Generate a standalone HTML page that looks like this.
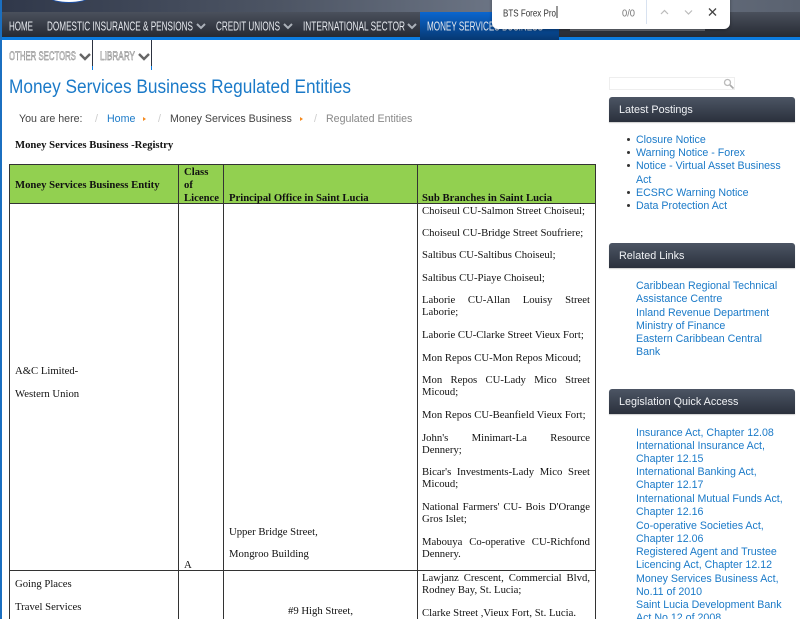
<!DOCTYPE html>
<html><head><meta charset="utf-8"><title>Money Services Business Regulated Entities</title>
<style>
html,body{margin:0;padding:0;background:#fff;width:800px;height:619px;overflow:hidden}
#p{position:relative;width:800px;height:619px;overflow:hidden;background:#fff;filter:blur(.3px)}
.a{position:absolute}
.t{position:absolute;white-space:nowrap;height:14px;margin-top:2px;font:10.7px/14px "Liberation Serif",serif;color:#111}
.b{font-weight:bold}
.j{width:168px;left:422px;text-align:justify;text-align-last:justify;white-space:normal}
.s{font:10.65px/14px "Liberation Sans",sans-serif;color:#1b7ac8;left:636px}
.c{font:10.65px/14px "Liberation Sans",sans-serif;color:#444}
.h{position:absolute;left:609px;width:186px;height:25px;background:linear-gradient(#4c5564,#2a303c);border-radius:3px 3px 0 0;color:#f0f2f5;font:10.8px/26px "Liberation Sans",sans-serif;text-indent:10px;box-shadow:0 1px 1px #ccc}
.d{position:absolute;left:627px;width:3px;height:3px;border-radius:50%;background:#333;margin-top:2px}
.l{position:absolute;background:#333}
</style></head><body><div id="p">
<div class="a" style="left:0;top:0;width:800px;height:12px;background:linear-gradient(90deg,#30384a,#4d5564 35%,#6f7888 65%,#5a6270)"></div>
<div class="a" style="left:50px;top:-8px;width:38px;height:11px;border-radius:50%;background:#fff;border:1px solid #1e4fa0;box-sizing:border-box"></div>
<div class="a" style="left:0;top:12px;width:800px;height:25px;background:linear-gradient(#4a505c,#262a33)"></div>
<div class="a" style="left:0;top:37px;width:800px;height:3px;background:#0c7ce0"></div>
<div class="a" style="left:420px;top:12px;width:139px;height:28px;background:linear-gradient(#0b66cf,#063872)"></div>
<svg class="a" style="left:0;top:0" width="800" height="75" font-family="Liberation Sans, sans-serif" font-size="13">
<g fill="#e6e9ee">
<text x="9" y="30.500" textLength="24" lengthAdjust="spacingAndGlyphs">HOME</text>
<text x="47" y="30.500" textLength="146" lengthAdjust="spacingAndGlyphs">DOMESTIC INSURANCE &amp; PENSIONS</text>
<text x="216" y="30.500" textLength="64" lengthAdjust="spacingAndGlyphs">CREDIT UNIONS</text>
<text x="303" y="30.500" textLength="102" lengthAdjust="spacingAndGlyphs">INTERNATIONAL SECTOR</text>
<text x="427" y="30.500" textLength="116" lengthAdjust="spacingAndGlyphs">MONEY SERVICES BUSINESS</text>
</g>
<g fill="none" stroke="#aab0b8" stroke-width="2">
<path d="M197 24l4 4 4-4M284 24l4 4 4-4M408 24l4 4 4-4"/>
</g>
<rect x="570" y="29" width="135" height="2" fill="#8a8f98" opacity=".6"/>
<g fill="#fff" stroke="#666" stroke-width=".45" font-size="12">
<text x="9" y="60" textLength="67" lengthAdjust="spacingAndGlyphs">OTHER SECTORS</text>
<text x="100" y="60" textLength="35" lengthAdjust="spacingAndGlyphs">LIBRARY</text>
</g>
<path d="M80 54l5 5 5-5M139 54l5 5 5-5" fill="none" stroke="#666" stroke-width="2.400"/>
<rect x="92" y="40" width="1" height="26" fill="#2c3240"/><rect x="92" y="66" width="1" height="4" fill="#0c7ce0"/>
<rect x="151" y="40" width="1" height="26" fill="#2c3240"/><rect x="151" y="66" width="1" height="4" fill="#0c7ce0"/>
</svg>
<div class="a" style="left:492px;top:-4px;width:238px;height:33px;background:#fff;border-radius:0 0 6px 6px;box-shadow:0 1px 3px rgba(0,0,0,.35)"></div>
<svg class="a" style="left:492px;top:0" width="238" height="29" font-family="Liberation Sans, sans-serif" font-size="10.500">
<text x="11" y="16.500" fill="#333" textLength="53" lengthAdjust="spacingAndGlyphs">BTS Forex Pro</text>
<rect x="64.500" y="6" width="1" height="12" fill="#333"/>
<text x="130" y="16.500" fill="#777" textLength="13" lengthAdjust="spacingAndGlyphs">0/0</text>
<rect x="154" y="0" width="1" height="24" fill="#d8e2f0"/>
<path d="M169 14l3.500-3.500 3.500 3.500M193 10.500l3.500 3.500 3.500-3.500" fill="none" stroke="#bbb" stroke-width="1.200"/>
<path d="M217 8.500l7 7M224 8.500l-7 7" fill="none" stroke="#444" stroke-width="1.300"/>
</svg>
<svg class="a" style="left:0;top:72px" width="420" height="32" font-family="Liberation Sans, sans-serif"><text x="9" y="21" font-size="19" fill="#1b7ac8" textLength="342" lengthAdjust="spacingAndGlyphs">Money Services Business Regulated Entities</text></svg>
<div class="t c" style="left:19px;top:110px">You are here:</div>
<div class="t c" style="left:95px;top:110px;color:#ccc">/</div>
<div class="t c" style="left:107px;top:110px;color:#1b7ac8">Home</div>
<div class="a" style="left:143px;top:117px;border-left:3px solid #f58a1f;border-top:2px solid transparent;border-bottom:2px solid transparent"></div>
<div class="t c" style="left:158px;top:110px;color:#ccc">/</div>
<div class="t c" style="left:170px;top:110px">Money Services Business</div>
<div class="a" style="left:300px;top:117px;border-left:3px solid #f58a1f;border-top:2px solid transparent;border-bottom:2px solid transparent"></div>
<div class="t c" style="left:314px;top:110px;color:#ccc">/</div>
<div class="t c" style="left:326px;top:110px;color:#888">Regulated Entities</div>
<div class="t b" style="left:15px;top:136px">Money Services Business -Registry</div>

<div class="a" style="left:10px;top:164px;width:585px;height:39px;background:#92d050"></div>
<div class="l" style="left:9px;top:164px;width:587px;height:1px"></div>
<div class="l" style="left:9px;top:203px;width:587px;height:1px"></div>
<div class="l" style="left:9px;top:570px;width:587px;height:1px"></div>
<div class="l" style="left:9px;top:164px;width:1px;height:455px"></div>
<div class="l" style="left:178px;top:164px;width:1px;height:455px"></div>
<div class="l" style="left:223px;top:164px;width:1px;height:455px"></div>
<div class="l" style="left:417px;top:164px;width:1px;height:455px"></div>
<div class="l" style="left:595px;top:164px;width:1px;height:455px"></div>

<div class="t b" style="left:15px;top:176px">Money Services Business Entity</div>
<div class="t b" style="left:184px;top:163px">Class</div>
<div class="t b" style="left:184px;top:176px">of</div>
<div class="t b" style="left:184px;top:189px">Licence</div>
<div class="t b" style="left:229px;top:189px">Principal Office in Saint Lucia</div>
<div class="t b" style="left:422px;top:189px">Sub Branches in Saint Lucia</div>

<div class="t" style="left:15px;top:362px">A&amp;C Limited-</div>
<div class="t" style="left:15px;top:385px">Western Union</div>
<div class="t" style="left:184px;top:556px">A</div>
<div class="t" style="left:229px;top:523px">Upper Bridge Street,</div>
<div class="t" style="left:229px;top:545px">Mongroo Building</div>
<div class="t" style="left:15px;top:575px">Going Places</div>
<div class="t" style="left:15px;top:598px">Travel Services</div>
<div class="t" style="left:224px;width:193px;text-align:center;top:602px">#9 High Street,</div>

<div class="t" style="left:422px;top:202px">Choiseul CU-Salmon Street Choiseul;</div>
<div class="t" style="left:422px;top:224px">Choiseul CU-Bridge Street Soufriere;</div>
<div class="t" style="left:422px;top:246px">Saltibus CU-Saltibus Choiseul;</div>
<div class="t" style="left:422px;top:269px">Saltibus CU-Piaye Choiseul;</div>
<div class="t j" style="top:291px">Laborie CU-Allan Louisy Street</div>
<div class="t" style="left:422px;top:303px">Laborie;</div>
<div class="t" style="left:422px;top:326px">Laborie CU-Clarke Street Vieux Fort;</div>
<div class="t" style="left:422px;top:349px">Mon Repos CU-Mon Repos Micoud;</div>
<div class="t j" style="top:371px">Mon Repos CU-Lady Mico Street</div>
<div class="t" style="left:422px;top:383px">Micoud;</div>
<div class="t" style="left:422px;top:406px">Mon Repos CU-Beanfield Vieux Fort;</div>
<div class="t j" style="top:429px">John's Minimart-La Resource</div>
<div class="t" style="left:422px;top:441px">Dennery;</div>
<div class="t j" style="top:463px">Bicar's Investments-Lady Mico Sreet</div>
<div class="t" style="left:422px;top:475px">Micoud;</div>
<div class="t j" style="top:498px">National Farmers' CU- Bois D'Orange</div>
<div class="t" style="left:422px;top:510px">Gros Islet;</div>
<div class="t j" style="top:533px">Mabouya Co-operative CU-Richfond</div>
<div class="t" style="left:422px;top:545px">Dennery.</div>
<div class="t j" style="top:569px">Lawjanz Crescent, Commercial Blvd,</div>
<div class="t" style="left:422px;top:581px">Rodney Bay, St. Lucia;</div>
<div class="t" style="left:422px;top:604px">Clarke Street ,Vieux Fort, St. Lucia.</div>

<div class="a" style="left:609px;top:77px;width:126px;height:13px;border:1px solid #eee;box-sizing:border-box"></div>
<svg class="a" style="left:722px;top:77px" width="14" height="13"><circle cx="5.500" cy="5.500" r="3" fill="none" stroke="#bbb" stroke-width="1.300"/><path d="M8 8l3.500 3.500" stroke="#aaa" stroke-width="1.600"/></svg>

<div class="h" style="top:97px">Latest Postings</div>
<div class="d" style="top:136px"></div><div class="t s" style="top:131px">Closure Notice</div>
<div class="d" style="top:149px"></div><div class="t s" style="top:144px">Warning Notice - Forex</div>
<div class="d" style="top:162px"></div><div class="t s" style="top:157px">Notice - Virtual Asset Business</div>
<div class="t s" style="top:171px">Act</div>
<div class="d" style="top:189px"></div><div class="t s" style="top:184px">ECSRC Warning Notice</div>
<div class="d" style="top:202px"></div><div class="t s" style="top:197px">Data Protection Act</div>

<div class="h" style="top:243px">Related Links</div>
<div class="t s" style="top:277px">Caribbean Regional Technical</div>
<div class="t s" style="top:290px">Assistance Centre</div>
<div class="t s" style="top:304px">Inland Revenue Department</div>
<div class="t s" style="top:317px">Ministry of Finance</div>
<div class="t s" style="top:330px">Eastern Caribbean Central</div>
<div class="t s" style="top:343px">Bank</div>

<div class="h" style="top:389px">Legislation Quick Access</div>
<div class="t s" style="top:424px">Insurance Act, Chapter 12.08</div>
<div class="t s" style="top:437px">International Insurance Act,</div>
<div class="t s" style="top:450px">Chapter 12.15</div>
<div class="t s" style="top:463px">International Banking Act,</div>
<div class="t s" style="top:476px">Chapter 12.17</div>
<div class="t s" style="top:490px">International Mutual Funds Act,</div>
<div class="t s" style="top:503px">Chapter 12.16</div>
<div class="t s" style="top:517px">Co-operative Societies Act,</div>
<div class="t s" style="top:530px">Chapter 12.06</div>
<div class="t s" style="top:543px">Registered Agent and Trustee</div>
<div class="t s" style="top:556px">Licencing Act, Chapter 12.12</div>
<div class="t s" style="top:570px">Money Services Business Act,</div>
<div class="t s" style="top:583px">No.11 of 2010</div>
<div class="t s" style="top:596px">Saint Lucia Development Bank</div>
<div class="t s" style="top:609px">Act No.12 of 2008</div>

<div class="a" style="left:0;top:0;width:2px;height:619px;background:#1b6fc0"></div>
</div></body></html>
